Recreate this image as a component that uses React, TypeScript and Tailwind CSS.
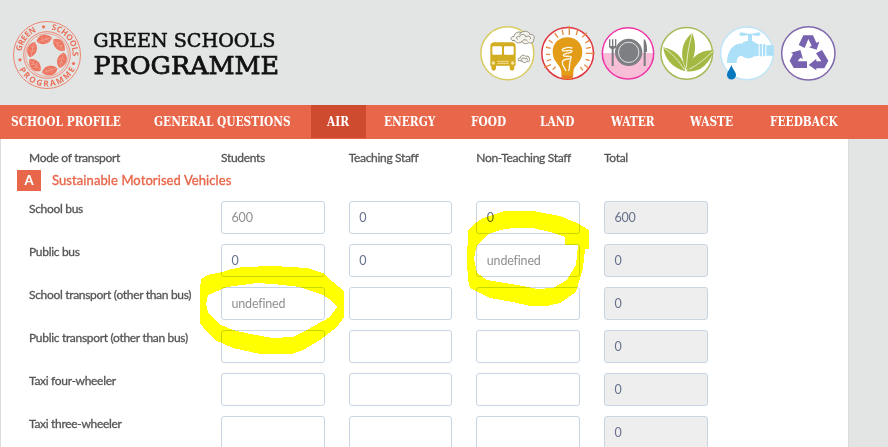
import React from 'react';

const nav = [
  { label: 'SCHOOL PROFILE', box: 'w-[143px]' },
  { label: 'GENERAL QUESTIONS', box: 'w-[173px]' },
  { label: 'AIR', box: 'w-[55px] mr-[2px] bg-[#cf4b30]' },
  { label: 'ENERGY', box: 'w-[87px]' },
  { label: 'FOOD', box: 'w-[69px]' },
  { label: 'LAND', box: 'w-[71px]' },
  { label: 'WATER', box: 'w-[79px]' },
  { label: 'WASTE', box: 'w-[80px]' },
  { label: 'FEEDBACK', box: 'w-[100px]' },
];

const rows: { label: string; values: string[]; total: string }[] = [
  { label: 'School bus', values: ['600', '0', '0'], total: '600' },
  { label: 'Public bus', values: ['0', '0', 'undefined'], total: '0' },
  { label: 'School transport (other than bus)', values: ['undefined', '', ''], total: '0' },
  { label: 'Public transport (other than bus)', values: ['', '', ''], total: '0' },
  { label: 'Taxi four-wheeler', values: ['', '', ''], total: '0' },
  { label: 'Taxi three-wheeler', values: ['', '', ''], total: '0' },
];

function Seal() {
  return (
    <svg width="72" height="72" viewBox="0 0 72 72" fill="none" stroke="#ee8471">
      <circle cx="36" cy="36" r="33.5" strokeWidth="1" />
      <circle cx="36" cy="36" r="23.3" strokeWidth="1" />
      <circle cx="36" cy="36" r="21.3" strokeWidth="0.7" />
      <path id="sealTop" d="M10.3 36A25.7 25.7 0 0 1 61.7 36A25.7 25.7 0 0 1 36 61.7" stroke="none" />
      <path id="sealBottom" d="M4.6 36A31.4 31.4 0 0 0 67.4 36" stroke="none" />
      <g fill="#ec7059" stroke="none" fontFamily="'Open Sans', sans-serif" fontWeight="700" fontSize="8.2">
        <text><textPath href="#sealTop" startOffset="3.5" textLength="26">GREEN</textPath></text>
        <text><textPath href="#sealTop" startOffset="44.5" textLength="37">SCHOOLS</textPath></text>
        <text><textPath href="#sealBottom" startOffset="15" textLength="69">PROGRAMME</textPath></text>
        <circle cx="32.5" cy="7.8" r="1.6" />
        <circle cx="9" cy="40.8" r="1.6" />
        <circle cx="62.5" cy="44.5" r="1.6" />
      </g>
      {[-10, 50, 110, 170, 230, 290].map((angle) => (
        <g key={angle} transform={`rotate(${angle} 36 36)`}>
          <path d="M28 21C30 15 38 13 44 19.5C41.5 25.5 33 27 28 21Z" fill="#ec7660" stroke="none" />
          <path d="M29 21.5L43 19.5M33 21L35 17.5M37 20.5L39 17.5M34 21L37 23.5M38 20.5L40.5 22" stroke="#f2b3a7" strokeWidth="0.5" />
        </g>
      ))}
    </svg>
  );
}

function Wordmark() {
  return (
    <svg width="192" height="56" viewBox="90 26 192 56" fill="#111" fontFamily="'DejaVu Serif', serif">
      <text x="93.3" y="46.7" fontSize="18" textLength="182" lengthAdjust="spacingAndGlyphs" stroke="#111" strokeWidth="0.5">GREEN SCHOOLS</text>
      <text x="93.5" y="74" fontSize="24" textLength="185.5" lengthAdjust="spacingAndGlyphs" stroke="#111" strokeWidth="0.75">PROGRAMME</text>
    </svg>
  );
}

function BusIcon() {
  return (
    <svg width="60" height="60" viewBox="24 24 180 180">
      <circle cx="112" cy="115" r="79.5" fill="#fff" stroke="#d8cb62" strokeWidth="4.5" />
      <path d="M61 94Q61 82 74 82H124Q137 82 137 94V152H133V160Q133 167 126 167Q119 167 119 160V152H78V160Q78 167 71 167Q64 167 64 160V152H61Z" fill="#d2ad20" />
      <rect x="67" y="94" width="29" height="25" rx="3" fill="#fff" />
      <rect x="102" y="94" width="29" height="25" rx="3" fill="#fff" />
      <path d="M82 139H116M82 145H116" stroke="#f2dd94" strokeWidth="3" />
      <circle cx="70" cy="144" r="5" fill="#f5e4a8" />
      <circle cx="128" cy="144" r="5" fill="#f5e4a8" />
      <g fill="#f4f3ee" stroke="#77705f" strokeWidth="2.2">
        <path d="M126 76C119 70 125 63 132 65C132 53 147 48 153 53C163 45 179 50 179 58C191 57 197 67 190 74C193 82 184 86 176 83C168 89 158 85 156 80C148 86 136 84 135 77Z" />
        <path d="M144 73C135 70 141 62 149 65C152 55 168 57 167 66C176 59 186 66 180 73M153 53C149 55 149 58 150 60M156 80C159 72 170 73 173 79" fill="none" />
        <path d="M146 137C141 132 147 128 151 129C151 120 163 118 167 124C174 121 181 127 177 132C183 137 177 142 171 139C166 145 157 143 156 138Z" />
        <path d="M156 137C151 130 161 127 165 131C171 128 174 133 171 136" fill="none" />
      </g>
    </svg>
  );
}

function BulbIcon() {
  return (
    <svg width="60" height="60" viewBox="204 24 180 180">
      <circle cx="293" cy="115" r="77.5" fill="#fff" stroke="#df3540" strokeWidth="4.5" />
      <path d="M298 33V60M276 44L280 60M323 44L319 60M350 53L337 67M254 54L264 68M236 75L248 84M358 76L346 84M228 96L242 100M375 115H347M228 118H241M363 97L348 100M230 138L243 133M222 157L243 149M359 137L347 133M355 158L343 149M248 164L257 155M339 166L331 156" stroke="#e88b42" strokeWidth="4" />
      <path d="M274 182V171C273 149 248 142 248 111C248 83 268 67 292 67S337 83 337 111C337 142 311 149 310 171V182Z" fill="#e39c18" />
      <path d="M275 181H309V186L304 193H280L275 187Z" fill="#e77d20" />
      <path d="M307 99C291 94 274 102 277 107C280 111 306 102 306 109C306 116 281 113 280 121C280 127 305 120 304 128C303 135 278 128 277 142C276 151 285 158 288 168M303 133C296 141 301 151 296 168" fill="none" stroke="#fff8e9" strokeWidth="4" />
    </svg>
  );
}

function PlateIcon() {
  return (
    <svg width="60" height="60" viewBox="384 24 180 180">
      <circle cx="474" cy="115" r="77" fill="#fff" />
      <path d="M397 114H551A77 77 0 0 1 397 114Z" fill="#f8bed8" />
      <circle cx="474" cy="115" r="77" fill="none" stroke="#ee35a4" strokeWidth="4.5" />
      <circle cx="476" cy="112" r="41" fill="#7d7f83" />
      <circle cx="476" cy="112" r="30.5" fill="none" stroke="#e7e3e7" strokeWidth="3" />
      <path d="M417 73V94Q417 101 425 102V153H431V102Q439 101 439 94V73H435V93H430V73H426V93H421V73Z" fill="#77797e" />
      <path d="M521 153V75Q521 71 525 74Q532 86 531 111H527V153Z" fill="#77797e" />
    </svg>
  );
}

function LeafIcon() {
  return (
    <svg width="60" height="60" viewBox="24 24 180 180">
      <circle cx="110" cy="115" r="77.5" fill="#fff" stroke="#a6ba57" strokeWidth="4.5" />
      <g fill="#a3b944">
        <path d="M110 165C86 120 95 79 127 54C140 89 140 125 110 165Z" />
        <path d="M106 169C102 128 78 106 40 97C43 131 67 160 106 169Z" />
        <path d="M110 169C148 174 178 148 192 106C148 105 121 126 110 169Z" />
      </g>
      <path d="M109 158C111 129 115 95 126 56M103 164C88 140 66 114 43 100M117 163C145 149 165 132 189 108" fill="none" stroke="#f2f6df" strokeWidth="2.5" />
    </svg>
  );
}

function TapIcon() {
  return (
    <svg width="60" height="60" viewBox="204 24 180 180">
      <circle cx="291" cy="115" r="79" fill="#fff" stroke="#bfe5f7" strokeWidth="4.5" />
      <g fill="#abe0f8">
        <path d="M273 52L294 56H307L326 52Q338 57 326 63L307 61H294L273 63Q262 58 273 52Z" />
        <path d="M294 60H306V77L321 86V124H312C306 132 285 133 276 122C264 122 260 132 260 144H231C231 106 250 84 279 86V81L294 77Z" />
        <path d="M321 87H326V123H321ZM329 87H336V124H329ZM339 87H346V124H339ZM349 91H371V122H349Z" />
      </g>
      <path d="M244 150C240 162 231 171 231 180A13.5 13.5 0 0 0 258 180C258 171 248 162 244 150Z" fill="#0878be" />
    </svg>
  );
}

function RecycleIcon() {
  return (
    <svg width="60" height="60" viewBox="384 24 180 180">
      <circle cx="475" cy="115" r="80" fill="#fff" stroke="#8068ad" strokeWidth="4.5" />
      <g fill="#7762af">
        <path d="M460 61H489L499 83L508 80L500 104L477 97L485 92L475 72L464 99L446 90Z" />
        <path d="M423 113L451 105L459 132L451 128L443 139H471V159H431L419 137L429 117Z" />
        <path d="M498 115L516 105L535 137L523 160H499V166L476 150L499 131V139H514Z" />
      </g>
    </svg>
  );
}

function Highlights() {
  return (
    <svg
      className="pointer-events-none absolute left-0 top-0 mix-blend-multiply"
      width="888"
      height="447"
      fill="#ffff00"
      fillRule="evenodd"
      shapeRendering="crispEdges"
    >
      <path d="M201 279L208 275L222 272L232 269L243 267L273 266L307 268L323 273L333 282L344 291V317L337 327L320 340L303 350L292 354H260L233 348L215 340L207 332L200 323V290ZM208 295L227 287L257 283L273 284L300 287L323 295L332 301L337 307L330 317L307 330L293 337L273 338L250 334L233 330L221 325L213 318L208 312L206 304Z" />
      <path d="M468 230L474 224L483 218L505 211H533L560 216L577 223L589 230V249H585L583 268L576 292L560 303L547 306H530L513 302L490 298L470 288L468 280L467 262ZM565 237V245H578L576 265L567 280L553 288L537 289L517 285L487 280L477 273L474 258L477 245L488 234L500 230L513 228H533L550 232Z" />
    </svg>
  );
}

function Field({ value, readOnly, pale }: { value: string; readOnly?: boolean; pale?: boolean }) {
  return (
    <div
      className={`flex h-[33px] w-[103.6px] items-center rounded-[3px] border border-[#c8d6e3] pl-[9.5px] pt-[2px] text-[12.5px] leading-none tracking-[-0.18px] ${
        readOnly ? 'bg-[#eeeeee]' : 'bg-white'
      } ${pale ? 'text-[#909090]' : 'text-[#66728c]'}`}
    >
      {value}
    </div>
  );
}

const columns = 'grid grid-cols-[192px_127.67px_127.67px_127.67px_104px]';
const labelText =
  'text-[12px] leading-[14px] tracking-[-0.31px] text-[#555] [-webkit-text-stroke:0.3px_#555] whitespace-nowrap';

export default function App() {
  return (
    <div className="relative h-[447px] w-[888px] overflow-hidden bg-[#e3e5e4] font-['Lato',sans-serif]">
      <header className="flex h-[105px] items-start">
        <div className="ml-[11px] mt-[19px]"><Seal /></div>
        <div className="ml-[7px] mt-[26px]"><Wordmark /></div>
        <div className="ml-[196px] mt-[23px] flex">
          <BusIcon />
          <BulbIcon />
          <PlateIcon />
          <LeafIcon />
          <TapIcon />
          <RecycleIcon />
        </div>
      </header>
      <nav className="h-[34px] overflow-hidden bg-[#e8664a]">
        <div className="-ml-[5px] flex w-[900px]">
          {nav.map((item) => (
            <a key={item.label} className={`block h-[33px] shrink-0 pl-4 ${item.box}`}>
              <span className="block w-max origin-left scale-x-[0.785] whitespace-nowrap font-['DejaVu_Serif',serif] text-[13.5px] font-bold leading-[32px] text-white">
                {item.label}
              </span>
            </a>
          ))}
        </div>
      </nav>
      <main className="h-[308px] w-[849px] border-x border-[#d9dcdb] bg-white">
        <div className={`${columns} ml-[28px] pt-3`}>
          {['Mode of transport', 'Students', 'Teaching Staff', 'Non-Teaching Staff', 'Total'].map((h) => (
            <div key={h} className={labelText}>{h}</div>
          ))}
        </div>
        <div className="ml-4 mt-[5px] flex h-[21px] items-center">
          <span className="flex h-[21px] w-6 items-center justify-center bg-[#e8664a] text-[13px] font-black text-white">A</span>
          <h2 className="ml-[11px] text-[13px] tracking-[0.09px] text-[#e8664a] [-webkit-text-stroke:0.35px_#e8664a]">Sustainable Motorised Vehicles</h2>
        </div>
        <div className="ml-[28px] mt-[10px] flex flex-col gap-[10px]">
          {rows.map((row, r) => (
            <div key={row.label} className={columns}>
              <div className={`${labelText} pt-px`}>{row.label}</div>
              {row.values.map((v, i) => (
                <Field key={i} value={v} pale={v === 'undefined' || (r === 0 && i === 0)} />
              ))}
              <Field value={row.total} readOnly />
            </div>
          ))}
        </div>
      </main>
      <Highlights />
    </div>
  );
}
